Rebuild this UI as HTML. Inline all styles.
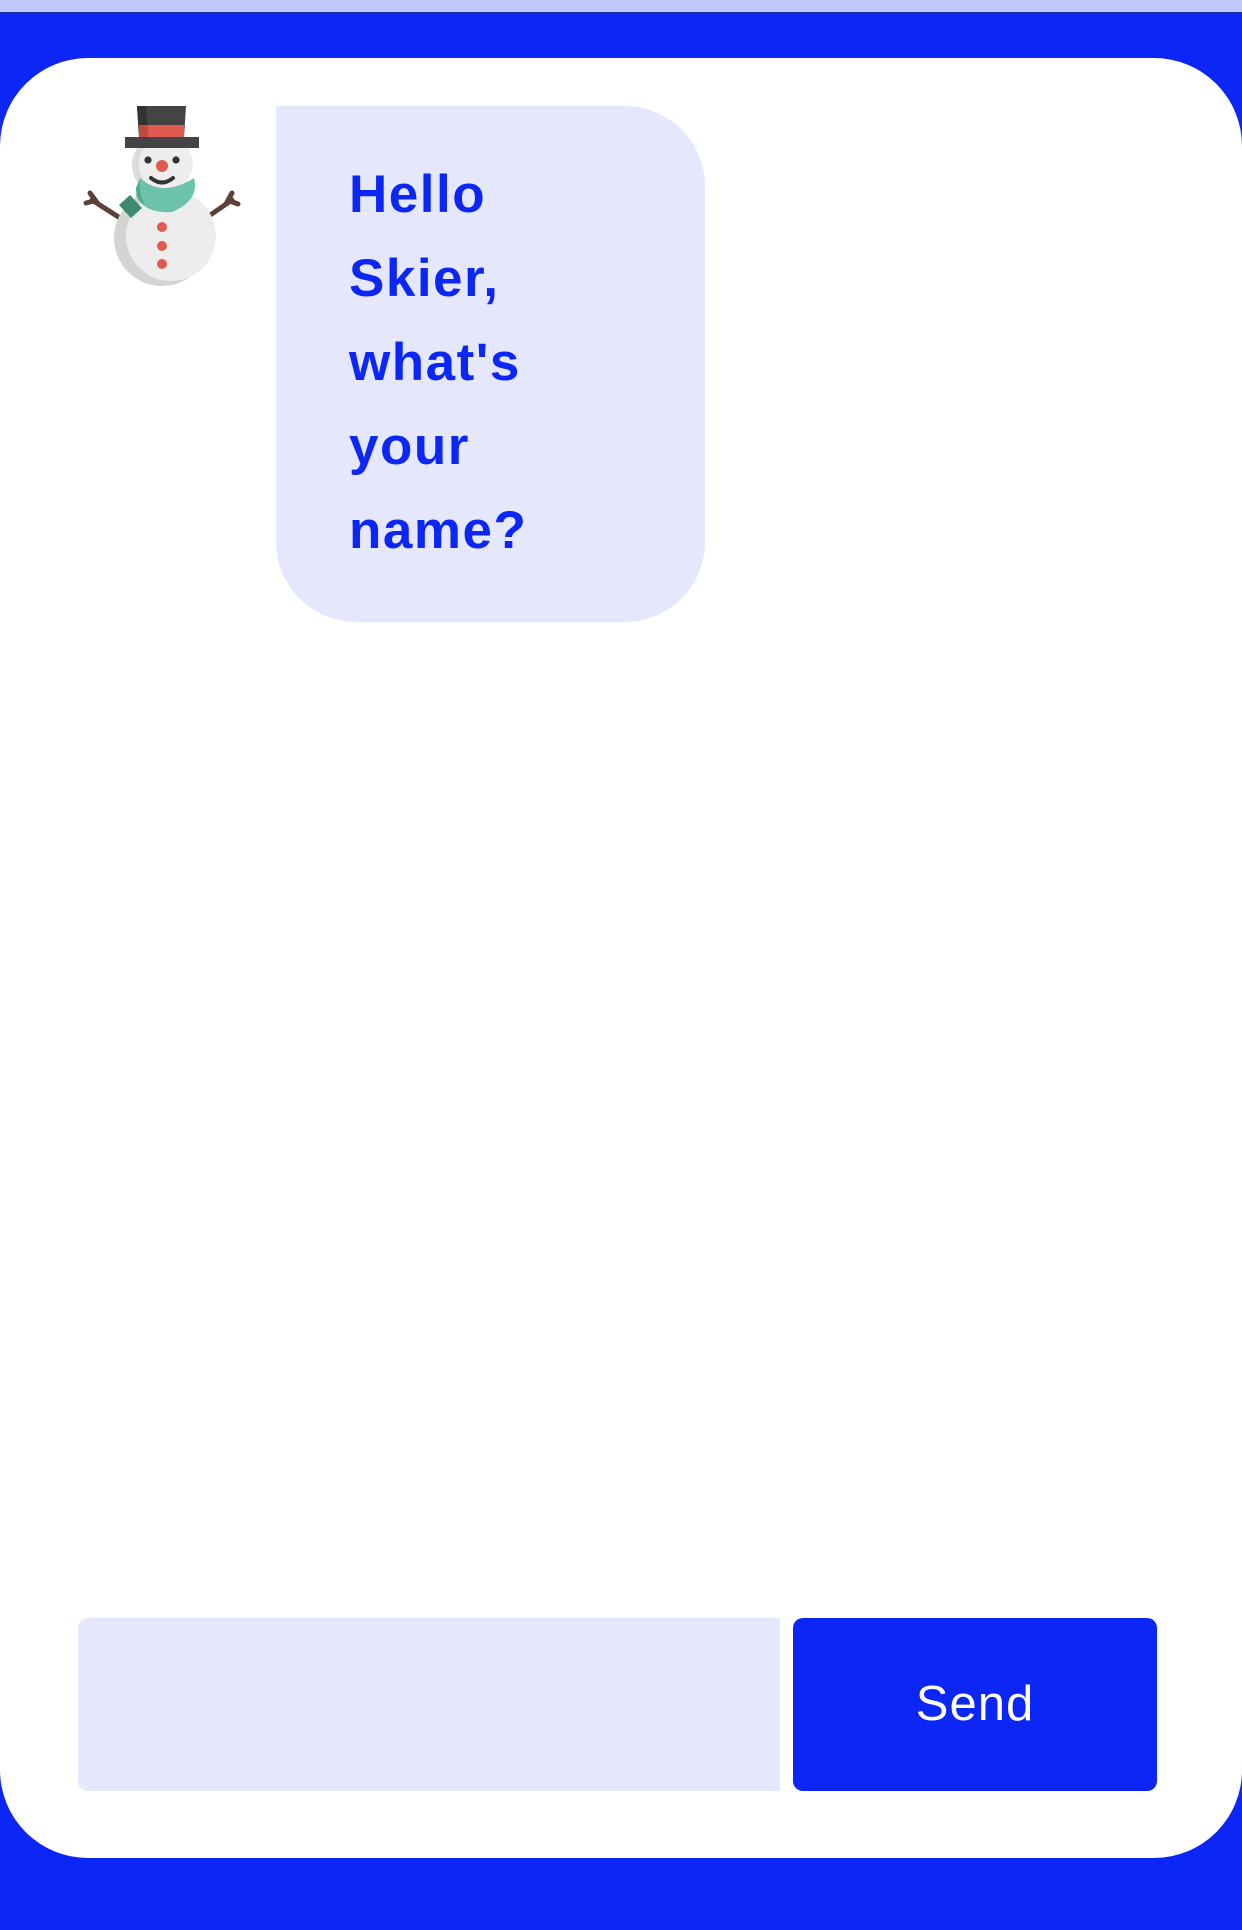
<!DOCTYPE html>
<html><head><meta charset="utf-8"><style>
html,body{margin:0;padding:0;}
body{width:1242px;height:1930px;background:#0c26f5;position:relative;overflow:hidden;font-family:"Liberation Sans",sans-serif;}
.top{position:absolute;left:0;top:0;width:1242px;height:12px;background:#c2c8fa;border-bottom:1px solid #1a2a90;}
.card{position:absolute;left:0;top:58px;width:1242px;height:1800px;background:#fff;border-radius:88px;}
.bubble{position:absolute;left:276px;top:106px;width:429px;height:516px;background:#e5e7fc;border-radius:80px;border-top-left-radius:0;box-sizing:border-box;padding:47px 0 0 73px;color:#0c26f5;font-weight:bold;font-size:53px;line-height:84px;letter-spacing:1.5px;}
.input{position:absolute;left:78px;top:1618px;width:702px;height:173px;background:#e5e7fc;border-radius:10px 0 0 10px;}
.btn{position:absolute;left:793px;top:1618px;width:364px;height:173px;background:#0c26f5;border-radius:10px;color:#fff;font-size:49px;text-align:center;line-height:173px;letter-spacing:1px;}
svg{position:absolute;left:0;top:0;}
</style></head><body>
<div class="top"></div>
<div class="card"></div>
<svg width="300" height="300" viewBox="0 0 300 300">
 <g stroke="#5d4037" stroke-width="5" stroke-linecap="round" fill="none">
  <path d="M120 218 L92 200 M98 204 L90 193 M94 201 L86 203"/>
  <path d="M206 218 L232 200 M226 204 L232 193 M230 201 L238 204"/>
 </g>
 <circle cx="162" cy="238" r="48" fill="#d4d4d4"/>
 <circle cx="171" cy="236" r="45" fill="#ededed"/>
 <circle cx="162" cy="165" r="30" fill="#dcdcdc"/>
 <circle cx="166" cy="164" r="27" fill="#ededed"/>
 <circle cx="148" cy="160" r="3.6" fill="#333"/>
 <circle cx="176" cy="160" r="3.6" fill="#333"/>
 <circle cx="162" cy="166" r="6" fill="#e05a50"/>
 <path d="M151 178 Q162 187 173 178" stroke="#333" stroke-width="4" fill="none" stroke-linecap="round"/>
 <path d="M119 205 L130 195 L142 208 L131 218 Z" fill="#3d8a6e"/>
 <path d="M140 178 Q162 198 194 178 Q200 200 172 212 Q145 214 136 196 Z" fill="#6cc3a9"/>
 <path d="M140 178 Q138 192 145 205 Q136 200 136 188 Z" fill="#4fa88a"/>
 <circle cx="162" cy="227" r="5" fill="#e05a50"/>
 <circle cx="162" cy="246" r="5" fill="#e05a50"/>
 <circle cx="162" cy="264" r="5" fill="#e05a50"/>
 <path d="M137 106 H186 L184 137 H139 Z" fill="#444"/>
 <path d="M137 106 H146 L148 137 H139 Z" fill="#333"/>
 <rect x="139" y="125" width="45" height="12" fill="#e05a50"/>
 <rect x="139" y="125" width="9" height="12" fill="#c24a42"/>
 <rect x="125" y="137" width="74" height="11" fill="#444"/>
</svg>
<div class="bubble">Hello<br>Skier,<br>what's<br>your<br>name?</div>
<div class="input"></div>
<div class="btn">Send</div>
</body></html>
